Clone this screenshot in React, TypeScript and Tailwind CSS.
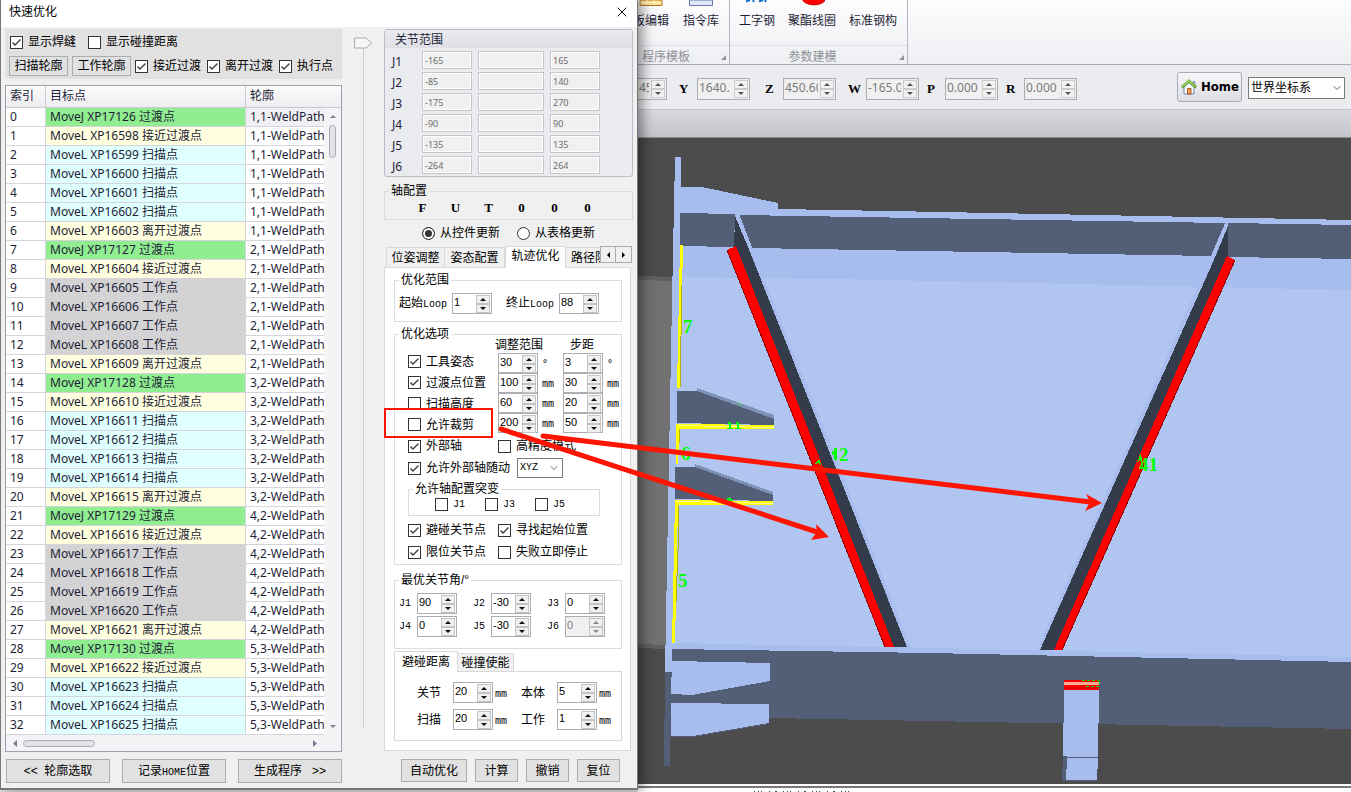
import React, { useId, useState } from "react";
import { ChevronDown, X } from "lucide-react";

type Kind = "move" | "near" | "scan" | "work";

const KIND_BG: Record<Kind, string> = {
  move: "bg-[#90ee90]",
  near: "bg-[#ffffe0]",
  scan: "bg-[#e0ffff]",
  work: "bg-[#d3d3d3]",
};

const ROWS: [string, string, string, Kind][] = [
  ["MoveJ XP17126", "过渡点", "1,1", "move"],
  ["MoveL XP16598", "接近过渡点", "1,1", "near"],
  ["MoveL XP16599", "扫描点", "1,1", "scan"],
  ["MoveL XP16600", "扫描点", "1,1", "scan"],
  ["MoveL XP16601", "扫描点", "1,1", "scan"],
  ["MoveL XP16602", "扫描点", "1,1", "scan"],
  ["MoveL XP16603", "离开过渡点", "1,1", "near"],
  ["MoveJ XP17127", "过渡点", "2,1", "move"],
  ["MoveL XP16604", "接近过渡点", "2,1", "near"],
  ["MoveL XP16605", "工作点", "2,1", "work"],
  ["MoveL XP16606", "工作点", "2,1", "work"],
  ["MoveL XP16607", "工作点", "2,1", "work"],
  ["MoveL XP16608", "工作点", "2,1", "work"],
  ["MoveL XP16609", "离开过渡点", "2,1", "near"],
  ["MoveJ XP17128", "过渡点", "3,2", "move"],
  ["MoveL XP16610", "接近过渡点", "3,2", "near"],
  ["MoveL XP16611", "扫描点", "3,2", "scan"],
  ["MoveL XP16612", "扫描点", "3,2", "scan"],
  ["MoveL XP16613", "扫描点", "3,2", "scan"],
  ["MoveL XP16614", "扫描点", "3,2", "scan"],
  ["MoveL XP16615", "离开过渡点", "3,2", "near"],
  ["MoveJ XP17129", "过渡点", "4,2", "move"],
  ["MoveL XP16616", "接近过渡点", "4,2", "near"],
  ["MoveL XP16617", "工作点", "4,2", "work"],
  ["MoveL XP16618", "工作点", "4,2", "work"],
  ["MoveL XP16619", "工作点", "4,2", "work"],
  ["MoveL XP16620", "工作点", "4,2", "work"],
  ["MoveL XP16621", "离开过渡点", "4,2", "near"],
  ["MoveJ XP17130", "过渡点", "5,3", "move"],
  ["MoveL XP16622", "接近过渡点", "5,3", "near"],
  ["MoveL XP16623", "扫描点", "5,3", "scan"],
  ["MoveL XP16624", "扫描点", "5,3", "scan"],
  ["MoveL XP16625", "扫描点", "5,3", "scan"],
];

const JOINTS = [
  ["J1", "-165", "165"],
  ["J2", "-85", "140"],
  ["J3", "-175", "270"],
  ["J4", "-90", "90"],
  ["J5", "-135", "135"],
  ["J6", "-264", "264"],
];

function Check({ text, on = false, mono = false }: { text: string; on?: boolean; mono?: boolean }) {
  const [checked, setChecked] = useState(on);
  return (
    <label className="flex items-center gap-[5px] whitespace-nowrap">
      <span className="grid size-[13px] shrink-0">
        <input
          type="checkbox"
          checked={checked}
          onChange={(e) => setChecked(e.target.checked)}
          className="col-start-1 row-start-1 size-[13px] appearance-none border border-[#333] bg-white"
        />
        {checked && (
          <svg viewBox="0 0 13 13" className="pointer-events-none col-start-1 row-start-1 size-[13px]">
            <path d="M2.5 6.5 L5 9 L10.5 3.5" fill="none" stroke="#3c3c3c" strokeWidth="1.4" />
          </svg>
        )}
      </span>
      <span className={mono ? "font-['Liberation_Mono'] text-[10px]" : ""}>{text}</span>
    </label>
  );
}

function Arrow({ up = false, color = "#111" }: { up?: boolean; color?: string }) {
  return (
    <svg viewBox="0 0 6 3" className="h-[3px] w-[6px]">
      <path d={up ? "M0 3 L3 0 L6 3Z" : "M0 0 L6 0 L3 3Z"} fill={color} />
    </svg>
  );
}

function Spin({
  id,
  name,
  value,
  disabled = false,
  compact = false,
}: {
  id?: string;
  name?: string;
  value: string;
  disabled?: boolean;
  compact?: boolean;
}) {
  const bg = disabled ? "bg-[#f0f0f0]" : "bg-white";
  const btn = "flex h-[9px] w-[14px] items-center justify-center border border-[#c4c4c4] bg-[#f0f0f0] ";
  return (
    <div className={`flex w-10 shrink-0 items-start border border-[#abadb3] ${bg} ${compact ? "h-5" : "h-[21px]"}`}>
      <input
        id={id}
        aria-label={name}
        defaultValue={value}
        disabled={disabled}
        className="h-4 w-0 min-w-0 flex-1 bg-transparent pl-px font-['Liberation_Sans'] text-[11px] leading-4 text-black disabled:text-[#7b7b7b]"
      />
      <span className="flex flex-col pt-px pr-px">
        <button type="button" aria-label={`${name ?? ""}增加`} className={btn}>
          <Arrow up color={disabled ? "#888" : "#111"} />
        </button>
        <button type="button" aria-label={`${name ?? ""}减少`} className={btn}>
          <Arrow color={disabled ? "#888" : "#111"} />
        </button>
      </span>
    </div>
  );
}

function LabelSpin({
  label,
  value,
  labelClass,
  unit,
  disabled,
}: {
  label: React.ReactNode;
  value: string;
  labelClass: string;
  unit?: string;
  disabled?: boolean;
}) {
  const id = useId();
  return (
    <div className="flex items-center">
      <label htmlFor={id} className={`whitespace-nowrap ${labelClass}`}>
        {label}
      </label>
      <Spin id={id} value={value} disabled={disabled} />
      {unit && <span className="ml-0.5 w-3 pt-0.5 font-['DejaVu_Sans_Mono'] text-[10px]">{unit}</span>}
    </div>
  );
}

function Group({ title, className = "", children }: { title: string; className?: string; children: React.ReactNode }) {
  return (
    <fieldset className={`min-w-0 border border-[#dcdcdc] ${className}`}>
      <legend className="ml-1 px-0.5 leading-[14px]">{title}</legend>
      {children}
    </fieldset>
  );
}

const BTN = "border border-[#adadad] bg-[#e1e1e1] text-center whitespace-nowrap";

function TargetTable() {
  return (
    <div className="relative mt-[6px] overflow-hidden border border-[#9da0b0] bg-white">
      <table className="w-full table-fixed border-separate border-spacing-0 text-left text-[#1e1e37]">
        <thead>
          <tr className="h-[22px] bg-linear-to-b from-[#fbfbfc] to-[#ededf1]">
            <th className="w-10 border-r border-b border-[#c9cad3] p-0 pl-1 font-normal leading-[21px]">索引</th>
            <th className="w-[200px] border-r border-b border-[#c9cad3] p-0 pl-1 font-normal leading-[21px]">目标点</th>
            <th className="border-b border-[#c9cad3] p-0 pl-1 font-normal leading-[21px]">轮廓</th>
          </tr>
        </thead>
        <tbody className="font-['Noto_Sans','Noto_Sans_CJK_SC',sans-serif]">
          {ROWS.map(([move, kind, group, k], i) => (
            <tr key={i} className="h-[19px]">
              <td className="border-r border-b border-[#d3d4dc] p-0 pl-1 leading-[18px]">{i}</td>
              <td className={`border-r border-b border-[#d3d4dc] p-0 pl-1 leading-[18px] whitespace-nowrap ${KIND_BG[k]}`}>
                {move} {kind}
              </td>
              <td
                className={`overflow-hidden border-b border-[#d3d4dc] p-0 pl-1 leading-[18px] whitespace-nowrap ${i === 0 ? "bg-[#f0f0f2]" : ""}`}
              >
                {group}-WeldPath
              </td>
            </tr>
          ))}
        </tbody>
      </table>
      <div className="absolute top-[22px] right-0 bottom-0 flex w-[17px] flex-col items-center justify-between bg-[#f4f4f7] pt-[7px] pb-[23px]">
        <div className="flex flex-col items-center gap-[7px]">
          <Arrow up color="#7b7e90" />
          <div className="h-[33px] w-[7px] rounded-full border border-[#a9abb6] bg-[#e2e3e9]" />
        </div>
        <Arrow color="#7b7e90" />
      </div>
      <div className="relative flex h-4 items-center bg-[#f4f4f7] pr-6 pl-[7px]">
        <svg viewBox="0 0 4 7" className="h-[7px] w-1">
          <path d="M4 0 L0 3.5 L4 7Z" fill="#7b7e90" />
        </svg>
        <div className="ml-[6px] h-[7px] w-[72px] rounded-full border border-[#a9abb6] bg-[#e2e3e9]" />
        <svg viewBox="0 0 4 7" className="ml-auto h-[7px] w-1">
          <path d="M0 0 L4 3.5 L0 7Z" fill="#7b7e90" />
        </svg>
      </div>
    </div>
  );
}

function LeftColumn() {
  return (
    <div className="w-[337px] shrink-0">
      <div className="h-[50px] bg-[#e1e1e1] pt-px pl-1">
        <div className="flex h-6 items-center gap-3 pl-px">
          <Check text="显示焊缝" on />
          <Check text="显示碰撞距离" />
        </div>
        <div className="flex h-6 items-center gap-[6px]">
          <div className="flex gap-1">
            <button type="button" className={`${BTN} h-5 w-[59px] leading-[18px]`}>
              扫描轮廓
            </button>
            <button type="button" className={`${BTN} h-5 w-[59px] leading-[18px]`}>
              工作轮廓
            </button>
          </div>
          <div className="-ml-0.5 flex gap-[6px]">
            <Check text="接近过渡" on />
            <Check text="离开过渡" on />
            <Check text="执行点" on />
          </div>
        </div>
      </div>
      <TargetTable />
      <div className="mt-[7px] flex gap-3 pl-px">
        <button type="button" className={`${BTN} h-6 flex-1`}>
          &lt;&lt;&nbsp;&nbsp;轮廓选取
        </button>
        <button type="button" className={`${BTN} h-6 flex-1`}>
          记录<span className="font-['Liberation_Mono'] text-[10px]">HOME</span>位置
        </button>
        <button type="button" className={`${BTN} h-6 flex-1`}>
          生成程序&nbsp;&nbsp;&nbsp;&gt;&gt;
        </button>
      </div>
    </div>
  );
}

function JointLimits() {
  const field =
    "h-[18px] border border-[#c5c5c9] bg-[#f0f0f0] pl-0.5 font-['Noto_Sans'] text-[9px] text-[#6d6d6d] outline outline-1 -outline-offset-2 outline-white";
  return (
    <section className="rounded-[3px] border border-[#b9bcca] bg-[#eaebef] pb-[2px]">
      <h2 className="h-[18px] bg-linear-to-b from-[#eaebef] to-[#dfe0e6] pl-[10px] leading-[21px] text-[#1e1e37]">关节范围</h2>
      <div className="flex flex-col gap-[3px] pt-[3px]">
        {JOINTS.map(([j, lo, hi]) => (
          <div key={j} className="flex h-[18px] items-center pl-[7px]">
            <span className="w-[30px] pt-1 font-['Noto_Sans'] text-[#1e1e37]">{j}</span>
            <input aria-label={`${j} 下限`} disabled defaultValue={lo} className={`${field} w-[50px]`} />
            <input aria-label={`${j} 当前`} disabled className={`${field} mx-[6px] w-[66px]`} />
            <input aria-label={`${j} 上限`} disabled defaultValue={hi} className={`${field} w-[50px]`} />
          </div>
        ))}
      </div>
    </section>
  );
}

function Radio({ text, on = false }: { text: string; on?: boolean }) {
  return (
    <label className="flex items-center gap-[5px]">
      <input
        type="radio"
        name="update-source"
        defaultChecked={on}
        className="size-[13px] appearance-none rounded-full border border-[#333] bg-white checked:bg-[#333] checked:shadow-[inset_0_0_0_2px_white]"
      />
      {text}
    </label>
  );
}

function OptionGroup() {
  const steps: [string, string, string, string][] = [
    ["工具姿态", "30", "3", "°"],
    ["过渡点位置", "100", "30", "mm"],
    ["扫描高度", "60", "20", "mm"],
    ["允许裁剪", "200", "50", "mm"],
  ];
  const unit = "w-[25px] shrink-0 pt-0.5 pl-1 font-['DejaVu_Sans_Mono'] text-[10px]";
  return (
    <Group title="优化选项" className="mt-[5px] pb-px">
      <div className="-mt-1 flex h-[98px] pl-[13px]">
        <div className="w-[90px] shrink-0 pt-[14px]">
          {steps.map(([t], i) => (
            <div key={t} className="flex h-[21px] items-center">
              <Check text={t} on={i < 2} />
            </div>
          ))}
        </div>
        <div className="w-0 flex-1">
          <div className="flex h-4 items-center whitespace-nowrap">
            <span className="-ml-[3px] w-[75px] shrink-0">调整范围</span>
            <span>步距</span>
          </div>
          {steps.map(([t, range, step, u]) => (
            <div key={t} className="flex h-5 items-center">
              <Spin compact name={`${t}调整范围`} value={range} />
              <span className={unit}>{u}</span>
              <Spin compact name={`${t}步距`} value={step} />
              <span className={unit}>{u}</span>
            </div>
          ))}
        </div>
      </div>
      <div className="grid h-[22px] grid-cols-[90px_1fr] items-center pl-[13px]">
        <Check text="外部轴" on />
        <Check text="高精度模式" />
      </div>
      <div className="flex h-[22px] items-center gap-[7px] pl-[13px]">
        <Check text="允许外部轴随动" on />
        <span className="grid items-center">
          <select
            aria-label="外部轴随动方向"
            className="col-start-1 row-start-1 h-5 w-[46px] appearance-none border border-[#7a7a7a] bg-white pl-0.5 font-['Liberation_Mono'] text-[10px]"
          >
            <option>XYZ</option>
          </select>
          <ChevronDown size={12} strokeWidth={1.5} className="pointer-events-none col-start-1 row-start-1 mr-[3px] justify-self-end text-[#444]" />
        </span>
      </div>
      <Group title="允许轴配置突变" className="mt-[3px] mr-[21px] ml-[13px]">
        <div className="flex h-[19px] items-center gap-5 pb-0.5 pl-[26px]">
          <Check text="J1" mono />
          <Check text="J3" mono />
          <Check text="J5" mono />
        </div>
      </Group>
      <div className="mt-[3px] grid h-11 grid-cols-[90px_1fr] grid-rows-2 items-center pl-[13px]">
        <Check text="避碰关节点" on />
        <Check text="寻找起始位置" on />
        <Check text="限位关节点" on />
        <Check text="失败立即停止" />
      </div>
    </Group>
  );
}

function RightColumn() {
  const best: [string, string][] = [
    ["J1", "90"],
    ["J2", "-30"],
    ["J3", "0"],
    ["J4", "0"],
    ["J5", "-30"],
    ["J6", "0"],
  ];
  const tab = "border border-b-0 border-[#d9d9d9] bg-[#f0f0f0]";
  const loop = <span className="font-['Liberation_Mono'] text-[10px]">Loop</span>;
  return (
    <div className="w-[249px] shrink-0">
      <JointLimits />
      <Group title="轴配置" className="mt-[7px]">
        <div className="flex h-[21px] pl-[21px] text-center font-['Liberation_Serif'] text-[13px] leading-5 font-bold">
          {["F", "U", "T", "0", "0", "0"].map((c, i) => (
            <span key={i} className="w-[33px]">
              {c}
            </span>
          ))}
        </div>
      </Group>
      <div className="flex h-[26px] items-center gap-[17px] pl-[38px]">
        <Radio text="从控件更新" on />
        <Radio text="从表格更新" />
      </div>
      <div className="flex h-[21px] items-end pl-[2px]">
        <button type="button" className={`${tab} h-5 w-[59px]`}>
          位姿调整
        </button>
        <button type="button" className={`${tab} h-5 w-[60px] border-l-0`}>
          姿态配置
        </button>
        <button type="button" className="relative z-10 -mb-px h-[22px] w-[61px] border border-b-0 border-[#d9d9d9] bg-white pb-1">
          轨迹优化
        </button>
        <button type="button" className={`${tab} h-5 w-[34px] overflow-hidden border-x-0 pl-[5px] text-left whitespace-nowrap`}>
          路径防碰
        </button>
        <button type="button" aria-label="向左" className="mb-1 flex h-[17px] w-4 items-center justify-center border border-[#adadad] bg-[#f0f0f0]">
          <svg viewBox="0 0 3 6" className="h-[6px] w-[3px]"><path d="M3 0 L0 3 L3 6Z" /></svg>
        </button>
        <button type="button" aria-label="向右" className="mb-1 flex h-[17px] w-4 items-center justify-center border border-l-0 border-[#adadad] bg-[#f0f0f0]">
          <svg viewBox="0 0 3 6" className="h-[6px] w-[3px]"><path d="M0 0 L3 3 L0 6Z" /></svg>
        </button>
      </div>
      <div className="mr-[2px] border border-[#d9d9d9] bg-white pt-[5px] pr-2 pb-[9px] pl-[9px]">
        <Group title="优化范围">
          <div className="flex h-[34px] items-start gap-[14px] pt-[6px] pl-1">
            <LabelSpin label={<>起始{loop}</>} value="1" labelClass="w-[53px]" />
            <LabelSpin label={<>终止{loop}</>} value="88" labelClass="w-[53px]" />
          </div>
        </Group>
        <OptionGroup />
        <Group title="最优关节角/°" className="mt-2">
          <div className="grid grid-cols-[74px_74px_74px] gap-y-[2px] pt-[6px] pb-[11px] pl-1">
            {best.map(([j, v]) => (
              <LabelSpin
                key={j}
                label={j}
                value={v}
                disabled={j === "J6"}
                labelClass="w-[18px] font-['Liberation_Mono'] text-[10px]"
              />
            ))}
          </div>
        </Group>
        <div className="mt-[2px] flex h-5 items-end">
          <button type="button" className="relative z-10 -mb-px h-[21px] w-16 border border-b-0 border-[#d9d9d9] bg-white">
            避碰距离
          </button>
          <button type="button" className={`${tab} h-[18px] w-14 border-l-0`}>
            碰撞使能
          </button>
        </div>
        <div className="grid grid-cols-[104px_104px] gap-y-[6px] border border-[#d9d9d9] pt-[10px] pb-[10px] pl-[22px]">
          <LabelSpin label="关节" value="20" unit="mm" labelClass="w-9" />
          <LabelSpin label="本体" value="5" unit="mm" labelClass="w-9" />
          <LabelSpin label="扫描" value="20" unit="mm" labelClass="w-9" />
          <LabelSpin label="工作" value="1" unit="mm" labelClass="w-9" />
        </div>
      </div>
      <div className="mt-2 flex gap-2 pl-[17px]">
        <button type="button" className={`${BTN} h-[23px] w-[66px]`}>自动优化</button>
        <button type="button" className={`${BTN} h-[23px] w-[43px]`}>计算</button>
        <button type="button" className={`${BTN} h-[23px] w-[43px]`}>撤销</button>
        <button type="button" className={`${BTN} h-[23px] w-[43px]`}>复位</button>
      </div>
    </div>
  );
}

function Dialog() {
  return (
    <section className="relative z-10 mb-[2px] w-[638px] shrink-0 border-r border-b-2 border-l border-[#777] bg-[#f0f0f0] shadow-[4px_0_12px_rgba(0,0,0,0.45)]">
      <header className="flex h-[27px] items-center justify-between bg-white pr-[7px] pb-1 pl-2">
        <h1>快速优化</h1>
        <button type="button" aria-label="关闭">
          <X size={16} strokeWidth={1.4} />
        </button>
      </header>
      <div className="flex pt-[2px] pb-[5px] pl-1">
        <LeftColumn />
        <div className="flex w-[42px] shrink-0 flex-col items-center pt-2">
          <svg viewBox="0 0 18 12" className="h-3 w-[18px]">
            <path d="M0.5 1 H12 L17.5 6 L12 11 H0.5Z" fill="#f6f6f6" stroke="#a6a8b0" />
          </svg>
          <div className="mb-14 w-px flex-1 bg-[#cfcfd3]" />
        </div>
        <RightColumn />
      </div>
    </section>
  );
}

function Pose({ axis, value }: { axis?: string; value: string }) {
  const id = useId();
  const btn = "flex h-[9px] w-[14px] items-center justify-center border border-[#cbcbcb] bg-[#f2f2f2]";
  return (
    <div className="flex items-center">
      {axis && (
        <label htmlFor={id} className="w-[18px] font-['Liberation_Serif'] text-[13px] font-bold">
          {axis}
        </label>
      )}
      <div className={`flex h-[22px] items-center border border-[#abadb3] bg-[#f0f0f0] pr-px ${axis ? "w-[53px]" : "w-[29px] border-l-0"}`}>
        <input
          id={id}
          aria-label={axis ? undefined : "X"}
          disabled
          defaultValue={value}
          className="mr-0.5 h-5 w-0 min-w-0 flex-1 pb-0.5 pl-px font-['Noto_Sans'] text-xs text-[#7b7b7b]"
        />
        <span className="flex flex-col">
          <button type="button" aria-label="增加" className={btn}><Arrow up color="#555" /></button>
          <button type="button" aria-label="减少" className={btn}><Arrow color="#555" /></button>
        </span>
      </div>
    </div>
  );
}

function RibbonGroup({
  title,
  className,
  captionClass = "",
  children,
}: {
  title: string;
  className: string;
  captionClass?: string;
  children: React.ReactNode;
}) {
  return (
    <section className={`flex flex-col border-r border-[#b4b6c2] ${className}`}>
      <div className="flex h-[45px] items-start text-[#1e1e37]">{children}</div>
      <div className="flex h-[19px] items-center border-t border-[#dedfe5] pt-[3px] text-[#8f9098]">
        <span className={`flex-1 text-center ${captionClass}`}>{title}</span>
        <svg viewBox="0 0 5 5" className="mt-[2px] mr-[3px] size-[5px]">
          <path d="M5 0 V5 H0Z" fill="#8f9098" />
        </svg>
      </div>
    </section>
  );
}

function RibbonButton({ text, className = "", children }: { text: string; className?: string; children?: React.ReactNode }) {
  return (
    <button type="button" className={`flex shrink-0 flex-col items-center whitespace-nowrap ${className}`}>
      <svg viewBox="0 0 26 8" className="h-2 w-[26px]">{children}</svg>
      <span className="mt-[5px] leading-4">{text}</span>
    </button>
  );
}

function Ribbon() {
  return (
    <div className="flex h-[65px] overflow-hidden border-b border-[#a9acb9] bg-linear-to-b from-[#fdfdfe] to-[#eeeff3]">
      <RibbonGroup title="程序模板" className="w-[92px]" captionClass="pr-[27px]">
        <RibbonButton text="板编辑" className="-ml-[5px]">
          <path d="M2 0 H24 V5.5 H2Z" fill="#fbe08d" stroke="#b5762a" />
          <path d="M9 0 V5 M16 0 V5 M3 2.5 H23" stroke="#fff4c8" />
        </RibbonButton>
        <RibbonButton text="指令库" className="ml-[14px]">
          <path d="M1.5 0 H24.5 V5.5 H1.5Z" fill="#dfe8fb" stroke="#6577ab" />
        </RibbonButton>
      </RibbonGroup>
      <RibbonGroup title="参数建模" className="w-[178px]" captionClass="pr-1">
        <RibbonButton text="工字钢" className="ml-[9px]">
          <path d="M2 1.5 L6 0 M9 0 L10 2 M15 1.5 L19 0 M21 0 L22 2" stroke="#1471c9" strokeWidth="2" fill="none" />
        </RibbonButton>
        <RibbonButton text="聚酯线圈" className="ml-[13px]">
          <ellipse cx="15" cy="-2" rx="12" ry="7" fill="#ff0000" stroke="#a40000" strokeWidth="0.7" />
        </RibbonButton>
        <RibbonButton text="标准钢构" className="ml-[13px]" />
      </RibbonGroup>
    </div>
  );
}

function Toolbar() {
  return (
    <div className="flex h-[45px] items-center border-b border-[#c3c4cc] bg-[#ebecf0]">
      <div className="flex flex-1 items-center gap-3 pt-[3px]">
        <Pose value="45" />
        <div className="flex items-center gap-[15px]">
          <Pose axis="Y" value="1640." />
          <Pose axis="Z" value="450.60" />
        </div>
        <div className="flex items-center gap-2">
          <Pose axis="W" value="-165.00" />
          <Pose axis="P" value="0.000" />
          <Pose axis="R" value="0.000" />
        </div>
      </div>
      <button
        type="button"
        className="flex h-[30px] w-[65px] items-center gap-1 rounded-[3px] border border-[#a9abb6] bg-linear-to-b from-[#f7f7f9] to-[#dcdde4] pl-[3px] font-['DejaVu_Sans_Condensed','DejaVu_Sans'] text-[13px] font-bold"
      >
        <svg viewBox="0 0 16 16" className="size-4 shrink-0">
          <path d="M12 2.5 H14 V7 L12 5Z" fill="#c8d4ea" stroke="#6f83b5" strokeWidth="0.8" />
          <path d="M3 8 L8 3.5 L13 8 V15 H3Z" fill="#f7faff" stroke="#6f83b5" />
          <path d="M6.5 9.5 H10 V15 H6.5Z" fill="#f2a35c" stroke="#a9581d" />
          <path d="M1 8.5 L8 2 L15 8.5" fill="none" stroke="#4f8c1c" strokeWidth="2.6" />
          <path d="M1.5 8 L8 2 L14.5 8" fill="none" stroke="#a5dc5f" strokeWidth="1.3" />
        </svg>
        Home
      </button>
      <span className="mr-[6px] ml-[6px] grid items-center pt-0.5">
        <select
          aria-label="坐标系"
          className="col-start-1 row-start-1 h-[22px] w-[97px] appearance-none border border-[#7a7a7a] bg-white pl-0.5 text-xs"
        >
          <option>世界坐标系</option>
        </select>
        <ChevronDown size={12} strokeWidth={1.5} className="pointer-events-none col-start-1 row-start-1 mr-[2px] justify-self-end text-[#333]" />
      </span>
    </div>
  );
}

function Scene() {
  return (
    <svg
      viewBox="638 138 713 646"
      preserveAspectRatio="xMinYMin slice"
      shapeRendering="crispEdges"
      className="block h-0 w-full flex-1 bg-[#4c4c4c]"
    >
      <path d="M638 276 L676 277 V648 L638 645Z" fill="#717171" />
      <path d="M638 276 L676 277 V281 L638 280Z M638 644 L668 645 V649 L638 648Z" fill="#606060" />
      <path
        d="M675 157 H681 V187 H702 L778 203 V209 L890 211 L1351 220 V664 L672 650 V672 H665 L668 510 L672 300Z"
        fill="#a6bdee"
      />
      <path d="M681 277 L890 280 L1351 290 V657 L930 648 L673 643Z" fill="#b1c5f1" />
      <path d="M680 213 L735 214 L734 247 L680 246Z M739 215 L980 219 L1225 223 L1211 256 L752 248Z M1228 223 L1351 225 V259 L1228 257Z" fill="#535f77" />
      <path
        d="M672 649 L930 653 L1351 662 V729 L930 721 L769 718 V724 L693 737 H670 V766 H664 L665 672 H672Z"
        fill="#535f77"
      />
      <path d="M672 661 L770 663 V681 L692 695 L671 694Z M671 703 L769 704 V723 L693 736 H671Z" fill="#a6bdee" />

      <path d="M735 214 H739 L752 247 L911 648 H905Z" fill="#a6bdee" />
      <path d="M735 216 L748 247 L907 647 H890 L734 249Z" fill="#343b4b" />
      <path d="M727 250 L736 246 L894 647 H885Z" fill="#ff0000" />
      <path d="M727 250 L885 647" stroke="#940000" />

      <path d="M1225 224 H1228 L1043 650 H1037 L1211 256Z" fill="#a6bdee" />
      <path d="M1228 226 V258 L1057 650 H1040 L1213 262Z" fill="#343b4b" />
      <path d="M1227 256 L1235 260 L1062 650 H1054Z" fill="#ff0000" />
      <path d="M1235 260 L1062 650" stroke="#940000" />

      <path d="M680 245 H683 L680 388 H677Z" fill="#ffff00" />
      <path d="M682 285 L680 387 M680 338 V387" stroke="#b4ad10" />
      <path d="M677 391 H697 L774 419 V425 L677 423Z M675 467 H695 L773 495 V501 L675 499Z" fill="#535f77" />
      <path d="M697 388 L774 415 V419 L697 391Z M695 464 L773 492 V495 L695 467Z" fill="#7e91b7" />
      <path d="M676 424 L774 425 V429 H680 L678 464 H676Z" fill="#ffff00" />
      <path d="M675 500 L773 501 V505 H678 L675 643 H672Z" fill="#ffff00" />
      <path d="M678 425.5 L774 427.5 M676 501.5 L773 503.5" stroke="#fffd9a" />
      <path d="M679 429 V443 M678 506 V550 L676 603" stroke="#b4ad10" fill="none" />

      <g fill="#00ff00" fontFamily="Liberation Serif" fontWeight="700" fontSize="19">
        <text x="683" y="333">7</text>
        <text x="681" y="460">6</text>
        <text x="678" y="587">5</text>
        <text x="839" y="461">2</text>
        <text x="1139" y="471">41</text>
      </g>
      <path d="M834 448 H837 V460 H834 V455 H832 V451 H834Z M815 464 L819 459 L822 467 L819 463Z M1137 462 L1141 453 L1143 468 L1140 460Z" fill="#00ff00" />
      <path
        d="M728 422 H731 V428 H733 V429 H727 V428 H729 V424 H728Z M736 422 H739 V428 H741 V429 H735 V428 H737 V424 H736Z M738 403 L743 406 L739 405Z M726 499 L730 497 L733 501 H729Z"
        fill="#00ff00"
      />

      <path d="M1064 690 H1099 L1098 757 H1063Z M1067 758 H1098 L1097 780 H1066Z" fill="#a6bdee" />
      <path d="M1063 756 H1067 L1066 781 H1097 V780 H1066 V781 H1062Z M1064 757 H1098 V758 H1064Z" fill="#535f77" />
      <path d="M1064 680 H1099 V690 H1064Z" fill="#f20000" />
      <path d="M1064 682 H1099 V685 H1064Z" fill="#ffab93" />
      <path d="M1082 680.5 H1099 M1086 686.5 H1100 M1099.5 681 V685" stroke="#00e000" strokeDasharray="3 2" />
    </svg>
  );
}

function Annotations() {
  return (
    <svg className="pointer-events-none absolute inset-0 z-20 h-full w-full" fill="#ff1400">
      <rect x="385" y="409" width="107" height="28" fill="none" stroke="#ff1400" strokeWidth="2" />
      <path d="M501 429 L817 532" stroke="#ff1400" strokeWidth="5" strokeLinecap="round" />
      <path d="M816 524 L829 537 L811 540 L817 532Z" />
      <path d="M543 436 L1090 502" stroke="#ff1400" strokeWidth="5" strokeLinecap="round" />
      <path d="M1086 494 L1102 503 L1085 511 L1090 502Z" />
    </svg>
  );
}

export default function App() {
  return (
    <div className="relative flex min-h-screen overflow-hidden bg-[#e6e6e6] font-['Liberation_Sans','Noto_Sans_CJK_SC',sans-serif] text-xs text-black">
      <Dialog />
      <main className="flex min-w-0 flex-1 flex-col">
        <Ribbon />
        <Toolbar />
        <div className="h-7 border-b border-[#8b8c92] bg-linear-to-b from-[#d8d9df] to-[#c4c5cc]" />
        <Scene />
        <div className="h-2 border-t-2 border-white bg-white">
          <div className="h-[2px] bg-[#777]" />
          <svg className="ml-[116px] block h-1 w-[102px]" shapeRendering="crispEdges">
            <path d="M0 3.5 H102" stroke="#1d6b1d" strokeDasharray="1 3 1 2 1 7 1 5 2 6" />
          </svg>
        </div>
      </main>
      <Annotations />
    </div>
  );
}
